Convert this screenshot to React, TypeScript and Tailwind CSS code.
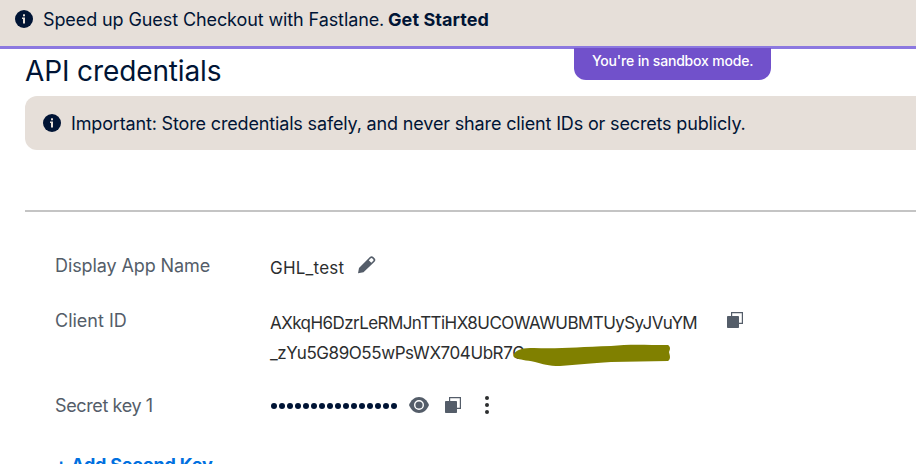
import type { ReactNode } from "react";

function InfoIcon() {
  return (
    <svg className="size-[18px] shrink-0" viewBox="0 0 18 18">
      <circle cx="9" cy="9" r="9" fill="#001435" />
      <rect x="8" y="4.3" width="2" height="2" fill="#e6dfd9" />
      <path d="M7 7.5h3v6H8V9H7z" fill="#e6dfd9" />
    </svg>
  );
}

function CopyIcon() {
  return (
    <svg className="size-4 shrink-0" viewBox="0 0 16 16">
      <path d="M4.6 4V.6h10.8v10.8H12" fill="none" stroke="#545d69" strokeWidth="1.2" />
      <rect x="0" y="4" width="12" height="12" rx="0.8" fill="#545d69" />
    </svg>
  );
}

function PencilIcon() {
  return (
    <svg className="size-[18px] shrink-0" viewBox="0 0 18 18">
      <path
        fillRule="evenodd"
        d="M0 17.2 1 12 11.9 1.1a2.4 2.4 0 0 1 3.4 0l1.2 1.2a2.4 2.4 0 0 1 0 3.4L5.5 16.2zM10.8 4.3l2.5 2.5 2-2a1 1 0 0 0 0-1.4l-1.1-1.1a1 1 0 0 0-1.4 0z"
        fill="#545d69"
      />
    </svg>
  );
}

function EyeIcon() {
  return (
    <svg className="h-4 w-5 shrink-0" viewBox="0 0 20 16">
      <path d="M0 8C2 3 5.500 0 10 0s8 3 10 8c-2 5-5.500 8-10 8S2 13 0 8z" fill="#545d69" />
      <circle cx="10" cy="8" r="4.300" fill="#545d69" stroke="#fff" strokeWidth="1.400" />
    </svg>
  );
}

function MoreIcon() {
  return (
    <svg className="h-[18px] w-1 shrink-0" viewBox="0 0 4 18" fill="#2c2e2f">
      <circle cx="2" cy="2" r="2" />
      <circle cx="2" cy="9" r="2" />
      <circle cx="2" cy="16" r="2" />
    </svg>
  );
}

function Row({ label, children }: { label: ReactNode; children: ReactNode }) {
  return (
    <div className="flex">
      <div className="w-[215px] shrink-0 text-[18px] text-[#545d69]">{label}</div>
      {children}
    </div>
  );
}

export default function App() {
  return (
    <div className="relative h-[464px] w-[916px] overflow-hidden bg-white font-['Inter','Liberation_Sans',sans-serif] text-[17px] leading-[30px] whitespace-nowrap text-[#001435]">
      <header className="flex h-[49px] items-start border-b-[3px] border-[#8c78e0] bg-[#e6dfd9] pt-[5px] pl-[15px] text-[18px]">
        <div className="mt-[5px] mr-[10px]">
          <InfoIcon />
        </div>
        <span className="w-[341px] tracking-[-0.1px]">Speed up Guest Checkout with Fastlane.</span>
        <b className="ml-1 font-bold tracking-[0.08px]">Get Started</b>
      </header>
      <div className="absolute top-12 left-[574px] h-8 w-[197px] rounded-b-[12px] bg-[#7151cb] pl-[18px] text-[14px] leading-[26px] font-medium tracking-[-0.18px] text-white">
        <span>You're in sandbox mode.</span>
      </div>

      <main className="pl-[25px]">
        <h1 className="h-[47px] pt-1 text-[28px] leading-[36px] tracking-[-0.12px]">
          <span>API credentials</span>
        </h1>
        <div className="flex h-[54px] items-center rounded-l-[12px] bg-[#e6dfd9] pl-[18px] text-[18px]">
          <InfoIcon />
          <span className="ml-[10px] pt-0.5 tracking-[-0.155px]">
            Important: Store credentials safely, and never share client IDs or secrets publicly.
          </span>
        </div>
        <section className="mt-[60px] border-t-2 border-[#c4c4c4] pt-[39px] pl-[30px] text-[#2c2e2f]">
          <Row label={<span className="tracking-[-0.1px]">Display App Name</span>}>
            <div className="flex pt-0.5">
              <span className="w-[88px] tracking-[0.22px]">GHL_test</span>
              <div className="mt-[3px]">
                <PencilIcon />
              </div>
            </div>
          </Row>
          <div className="mt-[23px]">
            <Row label={<span>Client ID</span>}>
              <div className="flex pt-0.5">
                <div className="relative w-[457px]">
                  <span className="block tracking-[-0.56px]">AXkqH6DzrLeRMJnTTiHX8UCOWAWUBMTUySyJVuYM</span>
                  <span className="block tracking-[-0.42px]">_zYu5G89O55wPsWX704UbR7C</span>
                  <svg className="absolute top-[36px] left-[243px] h-[24px] w-[158px]" viewBox="0 0 158 24">
                    <path
                      d="M1 10C4 5 10 4 21 4c25 1 44-1 77-2 17-2 34-1 57-1 3 2 2 5 1 7 1 4 2 7-1 9l-57 1c-20 1-34 3-51 4-12 0-17-2-25-4-9-2-16-2-18-4-4 0-4-3-3-4z"
                      fill="#808000"
                    />
                  </svg>
                </div>
                <div className="mt-1">
                  <CopyIcon />
                </div>
              </div>
            </Row>
          </div>
          <div className="mt-[23px]">
            <Row label={<span className="tracking-[-0.38px]">Secret key 1</span>}>
              <div className="flex h-[30px] items-center">
                <div className="flex w-[139px] gap-[2px] pl-px">
                  {Array.from({ length: 16 }, (_, i) => (
                    <i key={i} className="size-1.5 shrink-0 rounded-full bg-[#001435]" />
                  ))}
                </div>
                <div className="flex items-center pb-0.5">
                  <EyeIcon />
                  <div className="ml-4">
                    <CopyIcon />
                  </div>
                  <div className="ml-6">
                    <MoreIcon />
                  </div>
                </div>
              </div>
            </Row>
          </div>
          <div className="mt-[29px] text-[18px] font-bold tracking-[-0.2px] text-[#0070e0]">
            <span>+ Add Second Key</span>
          </div>
        </section>
      </main>
    </div>
  );
}
